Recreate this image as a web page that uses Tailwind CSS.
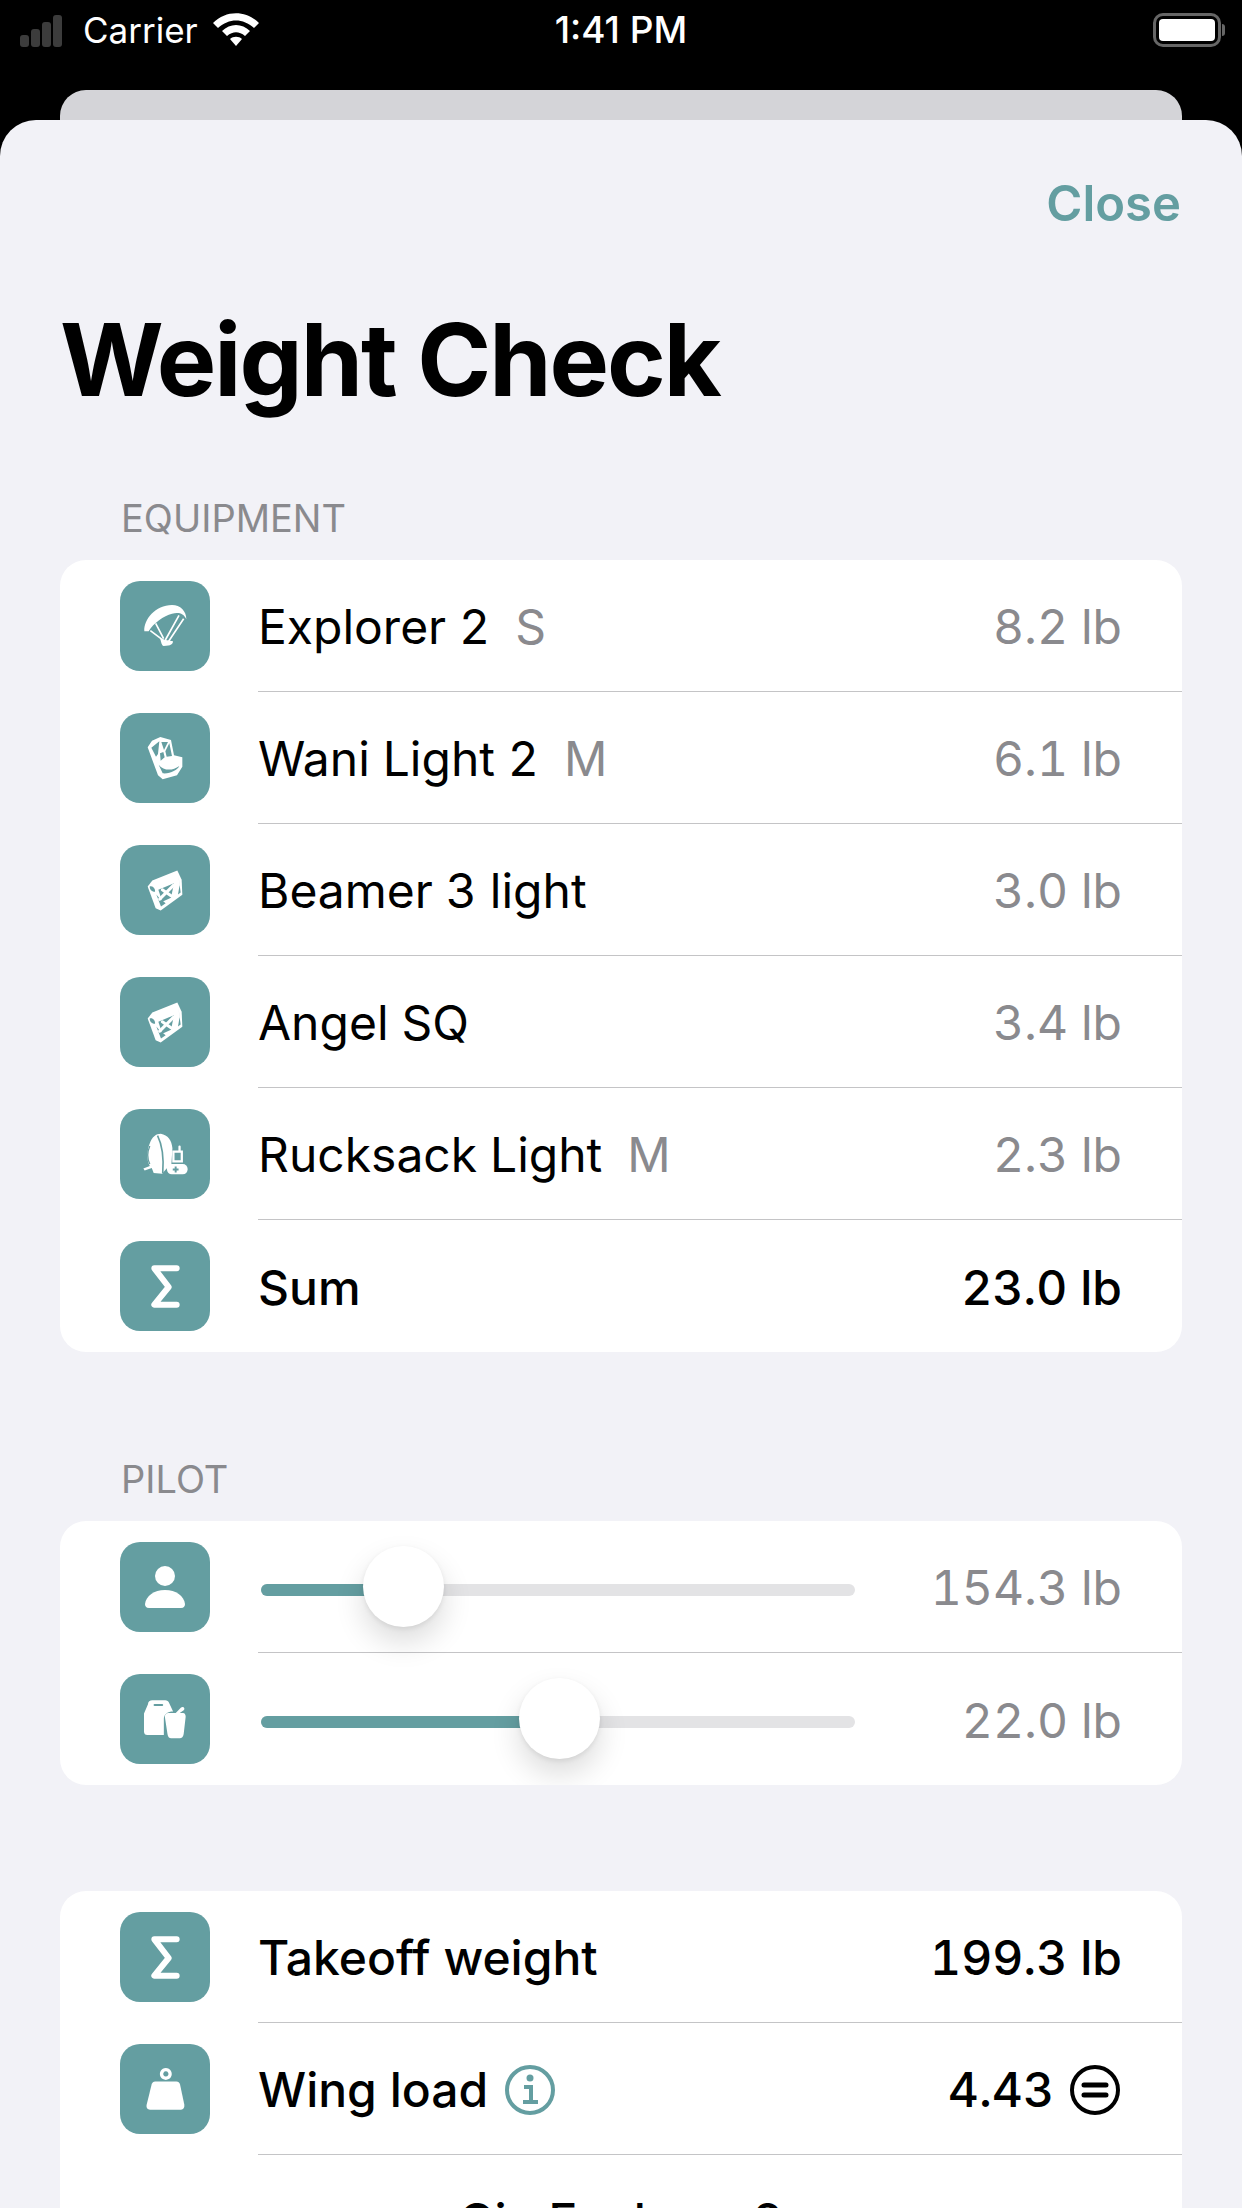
<!DOCTYPE html>
<html lang="en">
<head>
    <meta charset="UTF-8">
    <title>Weight Check</title>
    <script src="https://cdn.jsdelivr.net/npm/@tailwindcss/browser@4"></script>
</head>
<body class="bg-black">
<div class="w-[1242px] h-[2208px] overflow-hidden bg-black relative font-['Inter','Liberation_Sans',sans-serif]">
    <!-- Status bar -->
    <div class="h-[60px] pl-[20px] pr-[17px] flex items-center text-white text-[35px] relative">
        <div class="flex items-end gap-[2px] h-[33px] w-[52px]">
            <span class="w-[9px] h-[12px] rounded-[3px] bg-[#3c3c3c]"></span>
            <span class="w-[9px] h-[18px] rounded-[3px] bg-[#3c3c3c]"></span>
            <span class="w-[9px] h-[25px] rounded-[3px] bg-[#3c3c3c]"></span>
            <span class="w-[9px] h-[32px] rounded-[3px] bg-[#3c3c3c]"></span>
        </div>
        <span class="ml-[11px]">Carrier</span>
        <svg class="ml-[15px] mb-[2px]" width="46" height="33" viewBox="0 0 46 33" fill="white">
            <path d="M0 10C13 -3 33 -3 46 10L41 15C30 5 16 5 5 15Z"/><path d="M9 18C17 10 29 10 37 18L32 23C26 18 20 18 14 23Z"/><path d="M23 33L17 26C20 23 26 23 29 26Z"/>
        </svg>
        <span class="absolute left-0 right-0 text-center font-medium text-[37px]">1:41 PM</span>
        <div class="ml-auto flex items-center">
            <div class="w-[68px] h-[34px] rounded-[10px] border-[3px] border-[#666] p-[3px]"><div class="w-full h-full rounded-[4px] bg-white"></div></div>
            <div class="w-[3px] h-[12px] rounded-r-full bg-[#666] ml-[1px]"></div>
        </div>
    </div>

    <!-- Sheet behind -->
    <div class="mt-[30px] mx-[60px] h-[60px] rounded-t-[26px] bg-[#d4d4d8]"></div>

    <!-- Sheet -->
    <div class="absolute top-[120px] left-0 w-[1242px] h-[2088px] rounded-t-[36px] bg-[#f2f2f7]">
        <div class="pt-[55px] pr-[61px] text-right text-[#649ea1] text-[49px] leading-[58px] font-semibold">Close</div>
        <h1 class="mt-[65px] ml-[60px] text-[100px] leading-[124px] font-bold text-black tracking-[-2px]">Weight Check</h1>

        <p class="mt-[74px] ml-[121px] text-[#8a8a8e] text-[38px] leading-[44px]">EQUIPMENT</p>
        <div class="mt-[20px] mx-[60px] bg-white rounded-[26px] overflow-hidden text-[48px] tabular-nums">
            <div class="h-[132px] flex items-center pl-[60px]">
                <div class="w-[90px] h-[90px] shrink-0 rounded-[20px] bg-[#649ea1] flex items-center justify-center">
                    <svg width="44" height="44" viewBox="128 104 132 132" fill="none" stroke="white" stroke-width="5">
                        <path d="M132 186C130 150 165 108 215 107C240 107 258 125 258 150C250 132 235 128 215 133C190 140 160 160 145 186Z" fill="white" stroke="none"/>
                        <path d="M150 184L190 214M166 162L190 208M236 138L195 212M250 148L205 216"/>
                        <path d="M180 208L196 212L218 216C218 224 212 230 190 230C184 228 182 218 180 208Z" fill="white" stroke="none"/>
                    </svg>
                </div>
                <div class="ml-[48px] flex-1 h-full flex items-center pt-[3px] pr-[60px] border-b border-[#c4c4c6]"><span>Explorer 2</span><span class="ml-[25px] text-[#8a8a8e]">S</span><span class="ml-auto text-[#8a8a8e]">8.2 lb</span></div>
            </div>
            <div class="h-[132px] flex items-center pl-[60px]">
                <div class="w-[90px] h-[90px] shrink-0 rounded-[20px] bg-[#649ea1] flex items-center justify-center">
                    <svg width="36" height="44" viewBox="135 498 108 132" fill="white">
                        <path d="M137 532L150 512L175 501L207 510L216 556L241 562L241 590L225 616L182 628L168 616Z"/>
                        <path d="M148 533L172 514L168 552L162 560ZM178 516L198 516L186 540ZM202 520L210 558L194 560L190 544ZM174 550L184 546L188 562L176 572Z" fill="#649ea1"/>
                        <path d="M170 584C185 602 210 604 232 588C226 600 205 612 182 610Z" fill="#649ea1"/>
                    </svg>
                </div>
                <div class="ml-[48px] flex-1 h-full flex items-center pt-[3px] pr-[60px] border-b border-[#c4c4c6]"><span>Wani Light 2</span><span class="ml-[25px] text-[#8a8a8e]">M</span><span class="ml-auto text-[#8a8a8e]">6.1 lb</span></div>
            </div>
            <div class="h-[132px] flex items-center pl-[60px]">
                <div class="w-[90px] h-[90px] shrink-0 rounded-[20px] bg-[#649ea1] flex items-center justify-center">
                    <svg width="36" height="41" viewBox="134 121 108 122" fill="white">
                        <path d="M136 170L150 152L225 122L238 150L240 195L175 242L160 235Z"/>
                        <path d="M142 170C152 166 160 178 158 186C150 186 142 180 142 170ZM228 138L235 188L227 194L232 165ZM162 194L176 230L190 220L172 206Z" fill="#649ea1"/>
                        <path d="M168 180L215 160L206 204L180 216Z" fill="#649ea1"/>
                        <path d="M172 208L214 166M180 180L206 198" stroke="white" stroke-width="9" stroke-linecap="round"/>
                    </svg>
                </div>
                <div class="ml-[48px] flex-1 h-full flex items-center pt-[3px] pr-[60px] border-b border-[#c4c4c6]"><span>Beamer 3 light</span><span class="ml-auto text-[#8a8a8e]">3.0 lb</span></div>
            </div>
            <div class="h-[132px] flex items-center pl-[60px]">
                <div class="w-[90px] h-[90px] shrink-0 rounded-[20px] bg-[#649ea1] flex items-center justify-center">
                    <svg width="36" height="41" viewBox="134 121 108 122" fill="white">
                        <path d="M136 170L150 152L225 122L238 150L240 195L175 242L160 235Z"/>
                        <path d="M142 170C152 166 160 178 158 186C150 186 142 180 142 170ZM228 138L235 188L227 194L232 165ZM162 194L176 230L190 220L172 206Z" fill="#649ea1"/>
                        <path d="M168 180L215 160L206 204L180 216Z" fill="#649ea1"/>
                        <path d="M172 208L214 166M180 180L206 198" stroke="white" stroke-width="9" stroke-linecap="round"/>
                    </svg>
                </div>
                <div class="ml-[48px] flex-1 h-full flex items-center pt-[3px] pr-[60px] border-b border-[#c4c4c6]"><span>Angel SQ</span><span class="ml-auto text-[#8a8a8e]">3.4 lb</span></div>
            </div>
            <div class="h-[132px] flex items-center pl-[60px]">
                <div class="w-[90px] h-[90px] shrink-0 rounded-[20px] bg-[#649ea1] flex items-center justify-center">
                    <svg width="46" height="42" viewBox="128 128 142 130" fill="none">
                        <path d="M152 160C158 140 172 130 186 130C208 134 220 150 222 175L218 236L204 238L190 254L164 252L158 236L136 244L132 238L152 230C140 210 144 180 152 160Z" fill="white"/>
                        <path d="M176 136C188 160 196 200 192 252" stroke="#649ea1" stroke-width="5"/>
                        <path d="M152 168C144 186 144 208 152 224" stroke="#649ea1" stroke-width="4"/>
                        <path d="M225 186H251V216H225ZM244 186V170" stroke="white" stroke-width="7" stroke-linecap="round"/>
                        <rect x="205" y="224" width="64" height="32" rx="15" fill="white"/>
                        <path d="M232 232V250M223 241H241" stroke="#649ea1" stroke-width="6"/>
                    </svg>
                </div>
                <div class="ml-[48px] flex-1 h-full flex items-center pt-[3px] pr-[60px] border-b border-[#c4c4c6]"><span>Rucksack Light</span><span class="ml-[25px] text-[#8a8a8e]">M</span><span class="ml-auto text-[#8a8a8e]">2.3 lb</span></div>
            </div>
            <div class="h-[132px] flex items-center pl-[60px]">
                <div class="w-[90px] h-[90px] shrink-0 rounded-[20px] bg-[#649ea1] flex items-center justify-center">
                    <svg width="29" height="43" viewBox="152 524 87 129" fill="none" stroke="white" stroke-width="18" stroke-linecap="round" stroke-linejoin="round"><path d="M229 534H162L205 590L162 643H229"/></svg>
                </div>
                <div class="ml-[48px] flex-1 h-full flex items-center pt-[3px] pr-[60px] font-medium"><span>Sum</span><span class="ml-auto">23.0 lb</span></div>
            </div>
        </div>

        <p class="mt-[105px] ml-[121px] text-[#8a8a8e] text-[38px] leading-[44px]">PILOT</p>
        <div class="mt-[20px] mx-[60px] bg-white rounded-[26px] overflow-hidden text-[48px] tabular-nums">
            <div class="h-[132px] flex items-center pl-[60px]">
                <div class="w-[90px] h-[90px] shrink-0 rounded-[20px] bg-[#649ea1] flex items-center justify-center">
                    <svg width="40" height="42" viewBox="0 0 40 42" fill="white"><circle cx="20" cy="10" r="10"/><path d="M0 38C1 30 9 24 20 24C31 24 39 30 40 38C40 40 39 42 36 42H4C1 42 0 40 0 38Z"/></svg>
                </div>
                <div class="ml-[48px] flex-1 h-full flex items-center pt-[3px] pr-[60px] border-b border-[#c4c4c6]">
                    <div class="relative w-[594px] h-[12px] ml-[3px] mt-[3px] rounded-full bg-[#e3e3e5]">
                        <div class="w-[120px] h-full rounded-l-full bg-[#649ea1]"></div>
                        <div class="absolute left-[102px] top-[-38px] w-[81px] h-[81px] rounded-full bg-white shadow-[0_15px_30px_rgba(0,0,0,0.14),0_2px_5px_rgba(0,0,0,0.08)]"></div>
                    </div>
                    <span class="ml-auto text-[#8a8a8e]">154.3 lb</span>
                </div>
            </div>
            <div class="h-[132px] flex items-center pl-[60px]">
                <div class="w-[90px] h-[90px] shrink-0 rounded-[20px] bg-[#649ea1] flex items-center justify-center">
                    <svg width="42" height="39" viewBox="132 540 127 116" fill="white">
                        <path d="M144 552C144 545 150 540 157 540H196C202 540 206 543 208 548L220 574C204 574 192 582 192 596V645H142C136 645 132 641 132 635V580Z"/>
                        <rect x="161" y="551" width="29" height="6" rx="3" fill="#649ea1"/>
                        <path d="M195 590C195 582 200 578 206 578H228L244 562C250 556 258 564 252 570L240 578H250C255 578 258 582 258 590L252 642C251 650 246 655 240 655H214C208 655 204 650 203 642Z"/>
                    </svg>
                </div>
                <div class="ml-[48px] flex-1 h-full flex items-center pt-[3px] pr-[60px]">
                    <div class="relative w-[594px] h-[12px] ml-[3px] mt-[3px] rounded-full bg-[#e3e3e5]">
                        <div class="w-[280px] h-full rounded-l-full bg-[#649ea1]"></div>
                        <div class="absolute left-[258px] top-[-38px] w-[81px] h-[81px] rounded-full bg-white shadow-[0_15px_30px_rgba(0,0,0,0.14),0_2px_5px_rgba(0,0,0,0.08)]"></div>
                    </div>
                    <span class="ml-auto text-[#8a8a8e]">22.0 lb</span>
                </div>
            </div>
        </div>

        <div class="mt-[106px] mx-[60px] bg-white rounded-t-[26px] text-[48px] font-medium tabular-nums">
            <div class="h-[132px] flex items-center pl-[60px]">
                <div class="w-[90px] h-[90px] shrink-0 rounded-[20px] bg-[#649ea1] flex items-center justify-center">
                    <svg width="29" height="43" viewBox="152 524 87 129" fill="none" stroke="white" stroke-width="18" stroke-linecap="round" stroke-linejoin="round"><path d="M229 534H162L205 590L162 643H229"/></svg>
                </div>
                <div class="ml-[48px] flex-1 h-full flex items-center pt-[3px] pr-[60px] border-b border-[#c4c4c6]"><span>Takeoff weight</span><span class="ml-auto">199.3 lb</span></div>
            </div>
            <div class="h-[132px] flex items-center pl-[60px]">
                <div class="w-[90px] h-[90px] shrink-0 rounded-[20px] bg-[#649ea1] flex items-center justify-center">
                    <svg width="39" height="42" viewBox="136 504 118 127" fill="white">
                        <path d="M196 504A18 18 0 1 1 195.9 504ZM196 514A8 8 0 1 0 196.1 514Z" fill-rule="evenodd"/>
                        <path d="M164 545H228C234 545 237 549 239 554L252 615C253 624 249 630 242 630H148C141 630 136 624 138 615L153 554C155 549 158 545 164 545Z"/>
                    </svg>
                </div>
                <div class="ml-[48px] flex-1 h-full flex items-center pt-[3px] pr-[60px] border-b border-[#c4c4c6]">
                    <span>Wing load</span>
                    <svg class="ml-[17px]" width="50" height="50" viewBox="0 0 50 50" fill="none" stroke="#649ea1"><circle cx="25" cy="25" r="23" stroke-width="4"/><circle cx="25" cy="13" r="3.5" fill="#649ea1" stroke="none"/><path d="M19 22H26V37M18 37H33" stroke-width="4"/></svg>
                    <span class="ml-auto">4.43</span>
                    <svg class="ml-[16px] mr-[2px]" width="50" height="50" viewBox="0 0 50 50" fill="none" stroke="black" stroke-width="4"><circle cx="25" cy="25" r="23"/><path d="M14 20H36M14 30H36" stroke-width="5" stroke-linecap="round"/></svg>
                </div>
            </div>
            <div class="h-[132px] flex items-center justify-center"><span>Gin Explorer 2</span></div>
        </div>
    </div>
</div>
</body>
</html>
